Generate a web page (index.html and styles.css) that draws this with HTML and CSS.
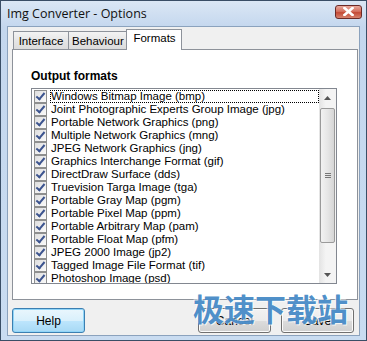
FILE: index.html
```html
<!DOCTYPE html>
<html>
<head>
<meta charset="utf-8">
<link rel="stylesheet" href="styles.css">
</head>
<body>
<div class="window">
  <div class="titlebar">
    <span class="title">Img Converter - Options</span>
    <span class="close"><svg width="11" height="9" viewBox="0 0 11 9"><path d="M1.5 1 L9.5 8 M9.5 1 L1.5 8" stroke="#fff" stroke-width="2.6" stroke-linecap="square"/></svg></span>
  </div>
  <div class="client">
    <div class="tabs">
      <div class="tab">Interface</div>
      <div class="tab">Behaviour</div>
      <div class="tab active">Formats</div>
    </div>
    <div class="panel">
      <div class="group-label">Output formats</div>
      <div class="listbox">
        <div class="rows">
          <div class="row"><span class="cb"></span><span class="lbl focus">Windows Bitmap Image (bmp)</span></div>
          <div class="row"><span class="cb"></span><span class="lbl">Joint Photographic Experts Group Image (jpg)</span></div>
          <div class="row"><span class="cb"></span><span class="lbl">Portable Network Graphics (png)</span></div>
          <div class="row"><span class="cb"></span><span class="lbl">Multiple Network Graphics (mng)</span></div>
          <div class="row"><span class="cb"></span><span class="lbl">JPEG Network Graphics (jng)</span></div>
          <div class="row"><span class="cb"></span><span class="lbl">Graphics Interchange Format (gif)</span></div>
          <div class="row"><span class="cb"></span><span class="lbl">DirectDraw Surface (dds)</span></div>
          <div class="row"><span class="cb"></span><span class="lbl">Truevision Targa Image (tga)</span></div>
          <div class="row"><span class="cb"></span><span class="lbl">Portable Gray Map (pgm)</span></div>
          <div class="row"><span class="cb"></span><span class="lbl">Portable Pixel Map (ppm)</span></div>
          <div class="row"><span class="cb"></span><span class="lbl">Portable Arbitrary Map (pam)</span></div>
          <div class="row"><span class="cb"></span><span class="lbl">Portable Float Map (pfm)</span></div>
          <div class="row"><span class="cb"></span><span class="lbl">JPEG 2000 Image (jp2)</span></div>
          <div class="row"><span class="cb"></span><span class="lbl">Tagged Image File Format (tif)</span></div>
          <div class="row"><span class="cb"></span><span class="lbl">Photoshop Image (psd)</span></div>
        </div>
        <div class="scrollbar">
          <div class="arrow up"><svg width="7" height="4" viewBox="0 0 7 4"><path d="M0 4 L3.5 0 L7 4 Z" fill="#555"/></svg></div>
          <div class="track">
            <div class="thumb"><span class="grip"></span></div>
          </div>
          <div class="arrow down"><svg width="7" height="4" viewBox="0 0 7 4"><path d="M0 0 L3.5 4 L7 0 Z" fill="#555"/></svg></div>
        </div>
      </div>
    </div>
    <div class="buttons">
      <button class="btn default">Help</button>
      <span class="spacer"></span>
      <button class="btn">Cancel</button>
      <button class="btn">Save</button>
    </div>
  </div>
  <div class="watermark">极速下载站</div>
</div>
</body>
</html>
```
FILE: styles.css
```css
html, body {
  margin: 0;
  padding: 0;
  background: #c9dcf0;
}
.window {
  position: relative;
  width: 367px;
  height: 341px;
  box-sizing: border-box;
  border: 1px solid #3a4e66;
  background: linear-gradient(#dbe7f5, #c4d7ee 26px, #c9dcf1);
  display: flex;
  flex-direction: column;
  font-family: "Liberation Sans", "DejaVu Sans", sans-serif;
  font-size: 11px;
  color: #000;
  overflow: hidden;
}
.titlebar {
  height: 25px;
  flex: none;
  display: flex;
  align-items: center;
  justify-content: space-between;
  padding: 0 4px 0 6px;
}
.title {
  font-family: "Open Sans", "Noto Sans", sans-serif;
  font-size: 12.5px;
  color: #111;
  margin-top: -1px;
}
.close {
  width: 25px;
  height: 12px;
  margin-top: -4px;
  border: 1px solid #6b2a27;
  border-radius: 3px;
  background: linear-gradient(#e9a99c, #d4705f 45%, #c44a36 55%, #d7836f);
  display: flex;
  align-items: center;
  justify-content: center;
}
.client {
  flex: 1;
  margin: 0 6px 4px 6px;
  border: 1px solid #8ba2bd;
  background: #f0f0f0;
  padding: 2px 2px 0 4px;
  display: flex;
  flex-direction: column;
}
.tabs {
  height: 20px;
  display: flex;
  align-items: flex-end;
  padding-left: 1px;
}
.tab {
  height: 17px;
  line-height: 18px;
  padding: 0 3px;
  border: 1px solid #8d929a;
  border-bottom: none;
  background: linear-gradient(#f3f3f3, #e6e6e6 50%, #dcdcdc);
  margin-right: -1px;
  color: #000;
  font-size: 11.5px;
  white-space: nowrap;
  text-align: center;
}
.tab:nth-child(1) { width: 48px; }
.tab:nth-child(2) { width: 51px; }
.tab.active {
  position: relative;
  z-index: 1;
  height: 20px;
  line-height: 17px;
  margin-bottom: -1px;
  background: #fff;
  width: 47px;
  padding: 0 3px 0 4px;
}
.panel {
  height: 249px;
  border: 1px solid #8d929a;
  background: #fff;
  padding: 0 0 0 18px;
  box-sizing: content-box;
  width: 326px;
}
.group-label {
  font-weight: bold;
  font-size: 12px;
  margin-top: 19px;
  height: 19px;
}
.listbox {
  width: 304px;
  height: 194px;
  border: 1px solid #828790;
  display: flex;
  overflow: hidden;
  background: #fff;
}
.rows {
  flex: 1;
  padding: 1px 0 0 2px;
  overflow: hidden;
}
.row {
  height: 13px;
  display: flex;
  align-items: center;
  white-space: nowrap;
}
.cb {
  flex: none;
  width: 11px;
  height: 11px;
  border: 1px solid #8e8f8f;
  background: linear-gradient(135deg, #dedede, #fbfbfb);
  position: relative;
  margin-right: 3px;
}
.cb::after {
  content: "";
  position: absolute;
  left: 3px;
  top: 0px;
  width: 3px;
  height: 7px;
  border: solid #3c548f;
  border-width: 0 2px 2px 0;
  transform: rotate(40deg);
}
.lbl {
  line-height: 13px;
  padding: 0 1px;
  font-size: 11.5px;
}
.lbl.focus {
  flex: 1;
  outline: 1px dotted #000;
  outline-offset: -1px;
  height: 13px;
}
.scrollbar {
  width: 17px;
  flex: none;
  display: flex;
  flex-direction: column;
  background: linear-gradient(90deg, #e3e3e3, #f4f4f4 40%, #f4f4f4);
}
.arrow {
  height: 17px;
  display: flex;
  align-items: center;
  justify-content: center;
}
.track {
  flex: 1;
  padding-top: 2px;
}
.thumb {
  height: 133px;
  margin: 0 1px;
  border: 1px solid #9a9a9a;
  border-radius: 2px;
  background: linear-gradient(90deg, #f2f2f2, #e6e6e6 50%, #d6d6d6);
  display: flex;
  align-items: center;
  justify-content: center;
}
.grip {
  width: 6px;
  height: 5px;
  background: repeating-linear-gradient(#777 0 1px, transparent 1px 2px);
}
.buttons {
  display: flex;
  align-items: center;
  margin-top: 8px;
  padding-right: 3px;
}
.spacer { flex: 1; }
.btn {
  width: 73px;
  height: 25px;
  margin: 0;
  font-family: "Liberation Sans", "DejaVu Sans", sans-serif;
  font-size: 12px;
  color: #000;
  border: 1px solid #707070;
  border-radius: 3px;
  background: linear-gradient(#f2f2f2, #ebebeb 50%, #dddddd 50%, #cfcfcf);
  box-shadow: inset 0 0 0 1px #fbfbfb;
  padding: 0;
}
.btn + .btn { margin-left: 10px; }
.btn.default {
  border-color: #3c7fb1;
  background: linear-gradient(#eaf6fd, #d9f0fc 50%, #bee6fd 50%, #a7d9f5);
  box-shadow: inset 0 0 0 1px #90d5f8;
}
.watermark {
  position: absolute;
  left: 192px;
  top: 287px;
  font-family: "Noto Sans CJK SC", sans-serif;
  font-weight: bold;
  font-size: 31px;
  line-height: 40px;
  color: rgba(48, 124, 192, 0.85);
  text-shadow: 1px 1px 0 rgba(255,255,255,0.7), -1px -1px 0 rgba(255,255,255,0.7);
}
```
